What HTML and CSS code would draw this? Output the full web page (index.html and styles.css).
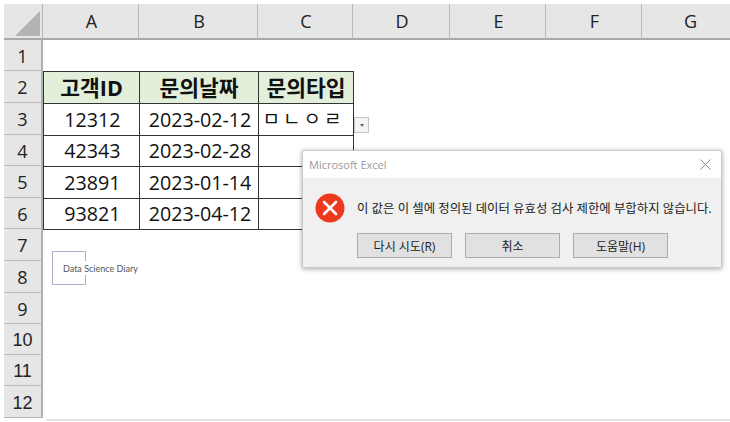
FILE: index.html
```html
<!DOCTYPE html>
<html lang="ko">
<head>
    <meta charset="UTF-8">
    <title>Excel 데이터 유효성 검사</title>
    <link rel="stylesheet" href="styles.css">
</head>
<body>
    <div class="sheet">
        <div class="corner"><span class="corner_mark"></span></div>
        <div class="col_head">A</div>
        <div class="col_head">B</div>
        <div class="col_head">C</div>
        <div class="col_head">D</div>
        <div class="col_head">E</div>
        <div class="col_head">F</div>
        <div class="col_head">G</div>

        <div class="row_head">1</div>
        <div class="blank wide"></div>

        <div class="row_head">2</div>
        <div class="cell title">고객ID</div>
        <div class="cell title">문의날짜</div>
        <div class="cell title last">문의타입</div>
        <div class="blank rest"></div>

        <div class="row_head">3</div>
        <div class="cell">12312</div>
        <div class="cell">2023-02-12</div>
        <div class="cell last jamo">ㅁㄴㅇㄹ</div>
        <div class="blank rest drop_holder">
            <span class="drop_btn"><span class="drop_arrow"></span></span>
        </div>

        <div class="row_head">4</div>
        <div class="cell">42343</div>
        <div class="cell">2023-02-28</div>
        <div class="cell last"></div>
        <div class="blank rest"></div>

        <div class="row_head">5</div>
        <div class="cell">23891</div>
        <div class="cell">2023-01-14</div>
        <div class="cell last"></div>
        <div class="blank rest"></div>

        <div class="row_head">6</div>
        <div class="cell end">93821</div>
        <div class="cell end">2023-04-12</div>
        <div class="cell last end"></div>
        <div class="blank rest"></div>

        <div class="row_head">7</div>
        <div class="blank wide logo_holder">
            <div class="logo">
                <span class="logo_text">Data Science Diary</span>
            </div>
        </div>

        <div class="row_head">8</div>
        <div class="blank wide"></div>
        <div class="row_head">9</div>
        <div class="blank wide"></div>
        <div class="row_head arial">10</div>
        <div class="blank wide"></div>
        <div class="row_head arial">11</div>
        <div class="blank wide"></div>
        <div class="row_head arial">12</div>
        <div class="blank wide"></div>
    </div>

    <div class="dialog">
        <div class="dialog_title">
            <span>Microsoft Excel</span>
            <svg class="dialog_close" width="11" height="11" viewBox="0 0 11 11">
                <path d="M0.5 0.5L10.5 10.5M10.5 0.5L0.5 10.5" stroke="#8a8a8a" stroke-width="1" fill="none"/>
            </svg>
        </div>
        <div class="dialog_body">
            <div class="dialog_msg">
                <svg class="error_icon" width="30" height="30" viewBox="0 0 30 30">
                    <circle cx="15" cy="15" r="14.5" fill="#ee3a1c"/>
                    <path d="M9 9L21 21M21 9L9 21" stroke="#fff" stroke-width="2.6" stroke-linecap="round" fill="none"/>
                </svg>
                <p>이 값은 이 셀에 정의된 데이터 유효성 검사 제한에 부합하지 않습니다.</p>
            </div>
            <div class="dialog_btns">
                <div class="btn">다시 시도(R)</div>
                <div class="btn">취소</div>
                <div class="btn">도움말(H)</div>
            </div>
        </div>
    </div>
    <div class="bottom_line"></div>
</body>
</html>
```

FILE: styles.css
```css
body {
    font-family: "Open Sans", "Noto Sans CJK KR", sans-serif;
    margin: 0;
    padding: 0;
    width: 730px;
    height: 422px;
    overflow: hidden;
    position: relative;
    background-color: #fff;
    color: #111;
}

.sheet {
    margin: 4px 0 0 4px;
    display: grid;
    grid-template-columns: 39px 96px 119px 95px 97px 96px 96px 96px;
    grid-template-rows: 36px 31px 32px 32px 31px 32px 31px 32px 32px 31px 31px 31px 32px;
}

.corner {
    background-color: #e6e6e6;
    border-right: 1px solid #b5b5b5;
    border-bottom: 2px solid #a9a9a9;
    box-sizing: border-box;
    display: flex;
    align-items: flex-end;
    justify-content: flex-end;
    padding: 0 2px 2px 0;
}
.corner_mark {
    width: 0;
    height: 0;
    border-style: solid;
    border-width: 0 0 25px 25px;
    border-color: transparent transparent #b4b4b4 transparent;
}

.col_head {
    background-color: #e6e6e6;
    border-right: 1px solid #b9b9b9;
    border-bottom: 2px solid #a9a9a9;
    box-sizing: border-box;
    display: flex;
    align-items: center;
    justify-content: center;
    font-size: 18px;
    padding-left: 2px;
    color: #222;
}

.row_head {
    background-color: #e6e6e6;
    border-right: 2px solid #b0b0b0;
    border-bottom: 1px solid #b9b9b9;
    box-sizing: border-box;
    display: flex;
    align-items: center;
    justify-content: center;
    font-size: 18px;
    padding-top: 1px;
    color: #222;
}
.arial {
    font-family: "Liberation Sans", sans-serif;
    padding-top: 3px;
}

.blank {
    min-width: 0;
}
.wide {
    grid-column: 2 / -1;
}
.rest {
    grid-column: 5 / -1;
}

.cell {
    border-top: 1px solid #333;
    border-left: 1px solid #333;
    box-sizing: border-box;
    display: flex;
    align-items: center;
    justify-content: center;
    font-size: 19.7px;
    padding: 0 0 1px 2px;
    white-space: nowrap;
    min-width: 0;
}
.cell.last {
    border-right: 1px solid #333;
    margin-right: -1px;
}
.cell.end {
    border-bottom: 1px solid #333;
    margin-bottom: -1px;
}
.title {
    background-color: #e2efda;
    font-weight: bold;
    font-size: 21.5px;
    padding: 0 0 3px;
}
.jamo {
    font-size: 19px;
    letter-spacing: 3px;
    padding: 0 5px 3px 0;
}

.drop_holder {
    position: relative;
}
.drop_btn {
    position: absolute;
    left: 1px;
    top: 14px;
    width: 15px;
    height: 16px;
    box-sizing: border-box;
    background-color: #f4f4f4;
    border: 1px solid #c4c4c4;
    display: flex;
    align-items: center;
    justify-content: center;
}
.drop_arrow {
    width: 0;
    height: 0;
    border-style: solid;
    border-width: 3px 2.5px 0 2.5px;
    border-color: #666 transparent transparent transparent;
}

.logo_holder {
    position: relative;
}
.logo {
    position: absolute;
    left: 9px;
    top: 22px;
    width: 34px;
    height: 34px;
    box-sizing: border-box;
    border: 1px solid #b3aec9;
    border-right: 0;
    display: flex;
    align-items: center;
}
.logo::before,
.logo::after {
    content: "";
    position: absolute;
    right: 0;
    width: 1px;
    height: 9px;
    background-color: #b3aec9;
}
.logo::before {
    top: 0;
}
.logo::after {
    bottom: 0;
}
.logo_text {
    margin-left: 10px;
    font-family: "Lato", sans-serif;
    font-size: 9px;
    white-space: nowrap;
    color: #555;
}

.dialog {
    position: absolute;
    left: 302px;
    top: 150px;
    width: 420px;
    height: 118px;
    box-sizing: border-box;
    background-color: #f0f0f0;
    border: 1px solid #c8c8c8;
    box-shadow: 0 1px 5px rgba(0, 0, 0, 0.35);
    display: flex;
    flex-direction: column;
}
.dialog_title {
    height: 27px;
    flex: none;
    background-color: #fff;
    display: flex;
    align-items: center;
    justify-content: space-between;
    padding: 0 10px 0 6px;
    font-size: 11px;
    color: #999;
}
.dialog_body {
    flex: 1;
    padding: 15px 0 0 12px;
}
.dialog_msg {
    display: flex;
    align-items: center;
    gap: 12px;
}
.dialog_msg p {
    margin: 0;
    font-size: 12.4px;
    white-space: nowrap;
    color: #222;
}
.error_icon {
    flex: none;
}
.dialog_btns {
    margin: 10px 0 0 42px;
    display: flex;
    gap: 13px;
}
.btn {
    width: 95px;
    height: 25px;
    box-sizing: border-box;
    background-color: #e1e1e1;
    border: 1px solid #adadad;
    display: flex;
    align-items: center;
    justify-content: center;
    font-size: 12px;
    color: #222;
}

.bottom_line {
    position: absolute;
    left: 46px;
    right: 0;
    top: 419px;
    height: 2px;
    background-color: #e4e4e4;
}
```
